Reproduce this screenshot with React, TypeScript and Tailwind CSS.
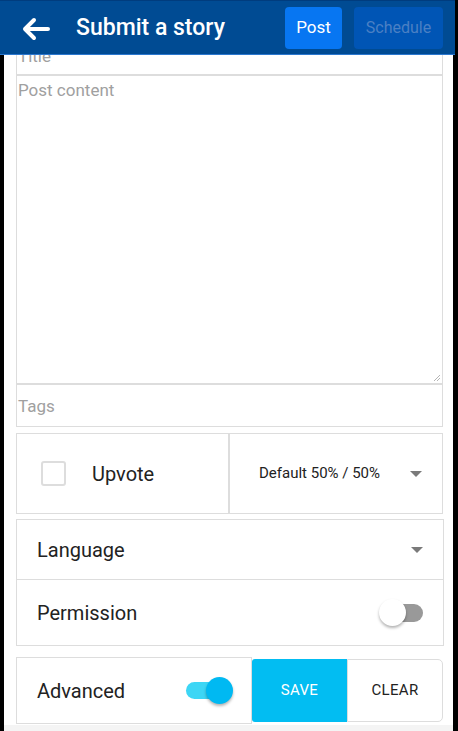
import * as React from "react";

const Caret: React.FC = () => (
  <svg width="12" height="6" viewBox="0 0 12 6" className="shrink-0">
    <path d="M0 0h12L6 6z" fill="#7a7a7a" />
  </svg>
);

interface ToggleProps {
  on: boolean;
}

const Toggle: React.FC<ToggleProps> = ({ on }) => (
  <div className={on ? "relative w-[39px] h-[17px]" : "relative w-[41px] h-[18px]"}>
    <div
      className={
        on
          ? "absolute inset-0 rounded-full bg-[#3dd6f5]"
          : "absolute inset-0 rounded-full bg-[#999999]"
      }
    />
    <div
      className={
        on
          ? "absolute top-[-5px] right-[-8px] w-[27px] h-[27px] rounded-full bg-[#00b9f2] shadow-[0_2px_3px_rgba(0,0,0,0.3)]"
          : "absolute top-[-5px] left-[-3px] w-[27px] h-[27px] rounded-full bg-white shadow-[0_2px_3px_rgba(0,0,0,0.3)]"
      }
    />
  </div>
);

const App: React.FC = () => {
  const [upvote, setUpvote] = React.useState<boolean>(false);

  return (
    <div
      className="w-[458px] h-[731px] bg-black overflow-hidden flex flex-col"
      style={{ fontFamily: "Roboto, 'Noto Sans', sans-serif" }}
    >
      {/* header */}
      <div className="w-[455px] h-[55px] shrink-0 bg-[#004b93] border-t border-t-[#003c7e] border-b border-b-[#2a77cf] flex items-center">
        <svg width="30" height="24" viewBox="0 0 30 24" className="ml-[21px] mt-[2px] shrink-0">
          <path
            d="M27 12H4M13 3l-9 9 9 9"
            fill="none"
            stroke="white"
            strokeWidth="4"
            strokeLinecap="round"
            strokeLinejoin="round"
          />
        </svg>
        <h1 className="ml-[25px] mt-[2px] text-[23px] font-medium text-white">
          Submit a story
        </h1>
        <button className="ml-auto w-[57px] h-[42px] rounded-[4px] bg-[#0776f2] text-white text-[17px]">
          Post
        </button>
        <button className="ml-[12px] mr-[12px] w-[89px] h-[42px] rounded-[4px] bg-[#0055b5] text-[#4b80c4] text-[16px]">
          Schedule
        </button>
      </div>

      {/* body */}
      <div className="flex-1 ml-[4px] w-[449px] bg-white flex flex-col">
        <div className="flex-1 flex flex-col pl-[12px] pr-[10px]">
          {/* title (scrolled) */}
          <div className="h-[21px] border-x border-b-2 border-[#dddddd] overflow-hidden">
            <div className="-mt-[9px] pl-[1px] text-[17px] leading-[20px] text-[#a0a0a0]">
              Title
            </div>
          </div>
          {/* content */}
          <div className="relative h-[309px] border-x border-b-2 border-[#dddddd] pl-[1px] pt-[2px] text-[17px] text-[#a0a0a0]">
            Post content
            <svg width="8" height="8" viewBox="0 0 8 8" className="absolute right-[1px] bottom-[1px]">
              <path d="M7 1L1 7M7 4L4 7" stroke="#b5b5b5" strokeWidth="1" />
            </svg>
          </div>
          {/* tags */}
          <div className="h-[42px] border-x border-b border-[#dddddd] pl-[1px] pt-[3px] flex items-center text-[17px] text-[#a0a0a0]">
            Tags
          </div>

          {/* upvote */}
          <div className="mt-[6px] h-[81px] border border-[#dddddd] flex">
            <div
              className="w-[213px] border-r-2 border-[#dddddd] flex items-center cursor-pointer"
              onClick={() => setUpvote(!upvote)}
            >
              <div className="ml-[24px] w-[25px] h-[25px] border-2 border-[#dddddd] rounded-[3px] flex items-center justify-center">
                {upvote && (
                  <svg width="16" height="16" viewBox="0 0 24 24">
                    <path d="M5 13l4 4L19 7" fill="none" stroke="#00b9f2" strokeWidth="3" />
                  </svg>
                )}
              </div>
              <span className="ml-[26px] text-[20px] text-[#222222]">Upvote</span>
            </div>
            <div className="flex-1 flex items-center pl-[29px] pr-[20px]">
              <span className="text-[15px] text-[#222222]">Default 50% / 50%</span>
              <span className="ml-auto">
                <Caret />
              </span>
            </div>
          </div>

          {/* language / permission */}
          <div className="mt-[5px] -mr-[1px] border border-[#dddddd] flex flex-col">
            <div className="h-[60px] border-b border-[#dddddd] flex items-center pl-[20px] pr-[20px]">
              <span className="text-[20px] text-[#222222]">Language</span>
              <span className="ml-auto">
                <Caret />
              </span>
            </div>
            <div className="h-[65px] flex items-center pl-[20px] pr-[20px]">
              <span className="text-[20px] text-[#222222]">Permission</span>
              <span className="ml-auto">
                <Toggle on={false} />
              </span>
            </div>
          </div>

          {/* advanced row */}
          <div className="mt-[11px] flex">
            <div className="w-[236px] h-[67px] border border-[#dddddd] flex items-center pl-[20px] pr-[26px]">
              <span className="text-[20px] text-[#222222]">Advanced</span>
              <span className="ml-auto">
                <Toggle on={true} />
              </span>
            </div>
            <div className="mt-[2px] h-[63px] flex-1 flex">
              <button className="w-[95px] h-full bg-[#02bdf2] rounded-l-[3px] text-white text-[15px] tracking-[0.3px]">
                SAVE
              </button>
              <button className="flex-1 h-full border border-[#dddddd] rounded-r-[5px] text-[#222222] text-[15px] tracking-[0.3px]">
                CLEAR
              </button>
            </div>
          </div>
          <div className="flex-1" />
        </div>
        <div className="h-[6px] bg-[#f4f4f4]" />
      </div>
    </div>
  );
};

export default App;
